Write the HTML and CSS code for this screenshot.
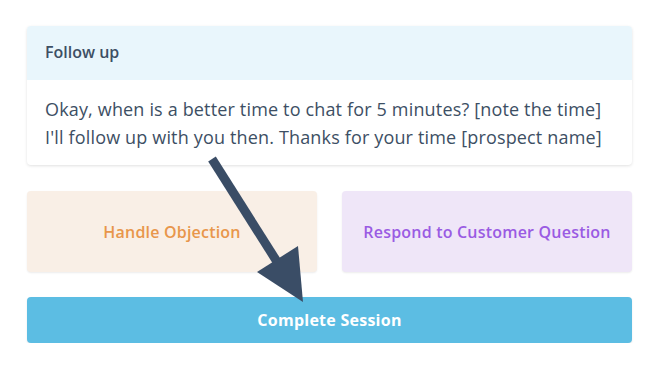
FILE: index.html
```html
<!DOCTYPE html>
<html>
<head>
  <title>Follow up</title>
  <link rel="stylesheet" href="styles.css">
</head>
<body>
  <div class="page">
    <div class="card">
      <div class="card-header">Follow up</div>
      <div class="card-body">
        Okay, when is a better time to chat for 5 minutes? [note the time]<br>
        I'll follow up with you then. Thanks for your time [prospect name]
      </div>
    </div>
    <div class="options">
      <div class="option objection">Handle Objection</div>
      <div class="option question">Respond to Customer Question</div>
    </div>
    <div class="complete-button">Complete Session</div>
  </div>

  <svg class="arrow" width="661" height="384" viewBox="0 0 661 384">
    <line x1="212" y1="159" x2="281" y2="268" stroke="#3a4d66" stroke-width="9"/>
    <polygon points="257,272 298,246 303,302" fill="#3a4d66"/>
  </svg>
</body>
</html>
```

FILE: styles.css
```css
* {
  box-sizing: border-box;
  margin: 0;
  padding: 0;
}

body {
  font-family: "Open Sans", Lato, sans-serif;
  background-color: #fff;
  color: #3d4f64;
}

.page {
  padding: 26px 29px 0 27px;
}

.card {
  background-color: #fff;
  border-radius: 4px;
  box-shadow: 0 1px 3px rgba(0, 0, 0, 0.12);
  overflow: hidden;
}

.card-header {
  background-color: #e9f6fc;
  height: 54px;
  line-height: 52px;
  padding-left: 18px;
  font-size: 16px;
  font-weight: 600;
}

.card-body {
  padding: 15px 18px 14px;
  font-size: 18px;
  letter-spacing: 0.16px;
  line-height: 28px;
}

.options {
  display: flex;
  gap: 25px;
  margin-top: 26px;
}

.option {
  flex: 1;
  height: 81px;
  display: flex;
  align-items: center;
  justify-content: center;
  border-radius: 4px;
  box-shadow: 0 1px 2px rgba(0, 0, 0, 0.08);
  font-size: 16px;
  font-weight: 600;
  letter-spacing: 0.2px;
}

.objection {
  background-color: #f9efe6;
  color: #e8964b;
}

.question {
  background-color: #efe6f8;
  color: #9a5be3;
}

.complete-button {
  margin-top: 25px;
  height: 46px;
  line-height: 46px;
  text-align: center;
  background-color: #5cbde3;
  color: #fff;
  border-radius: 4px;
  box-shadow: 0 1px 2px rgba(0, 0, 0, 0.1);
  font-size: 16px;
  font-weight: 700;
  letter-spacing: 0.25px;
}

.arrow {
  position: absolute;
  top: 0;
  left: 0;
}
```
